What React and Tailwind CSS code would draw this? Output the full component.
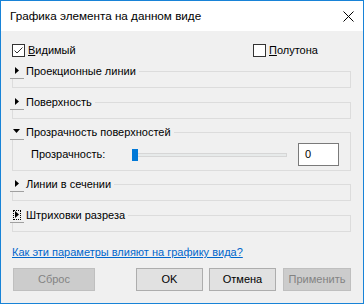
import React from "react";

function Checkbox({ checked }) {
  return (
    <div className="w-[13px] h-[13px] border border-[#333333] bg-white flex items-center justify-center shrink-0">
      {checked && (
        <svg width="11" height="11" viewBox="0 0 11 11">
          <path d="M1.5 5.5 L4 8 L9.5 2.5" fill="none" stroke="#333333" strokeWidth="1" />
        </svg>
      )}
    </div>
  );
}

function Expander({ open, focus }) {
  return (
    <div className={"w-[14px] h-[16px] bg-[#f0f0f0] border-b border-[#a0a0a0] flex items-center justify-center shrink-0 " + (focus ? "outline outline-1 outline-dotted outline-black -outline-offset-[4px]" : "")}>
      {open ? (
        <svg width="8" height="5" viewBox="0 0 8 5"><path d="M0 0 H7 L3.5 4 Z" fill="#000" /></svg>
      ) : (
        <svg width="5" height="8" viewBox="0 0 5 8"><path d="M0 0 V7 L4 3.5 Z" fill="#000" /></svg>
      )}
    </div>
  );
}

function Group({ title, open, focus, className, children }) {
  return (
    <div className={"w-[339px] border border-[#dcdcdc] flex flex-col " + className}>
      <div className="-mt-[9px] -ml-[3px] h-[16px] flex items-center w-fit bg-[#f0f0f0] pr-[3px]">
        <Expander open={open} focus={focus} />
        <span className="ml-[2px] leading-[16px]">{title}</span>
      </div>
      {children}
    </div>
  );
}

export default function App() {
  return (
    <div
      className="w-[364px] h-[304px] border border-[#1883d7] bg-[#f0f0f0] flex flex-col text-[11px] text-black"
      style={{ fontFamily: '"Liberation Sans", Arial, sans-serif' }}
    >
      <div className="h-[30px] bg-white flex items-center pl-[9px] pr-[9px] shrink-0">
        <span className="text-[11.7px]">Графика элемента на данном виде</span>
        <svg className="ml-auto" width="11" height="11" viewBox="0 0 11 11">
          <path d="M0.5 0.5 L10.5 10.5 M10.5 0.5 L0.5 10.5" stroke="#000" strokeWidth="1" />
        </svg>
      </div>
      <div className="flex flex-col pl-[11px]">
        <div className="mt-[13px] h-[13px] flex items-center">
          <div className="w-[241px] flex items-center">
            <Checkbox checked />
            <span className="ml-[3px] leading-[13px]"><span className="underline">В</span>идимый</span>
          </div>
          <div className="flex items-center">
            <Checkbox />
            <span className="ml-[3px] leading-[13px]"><span className="underline">П</span>олутона</span>
          </div>
        </div>
        <Group title="Проекционные линии" className="mt-[14px] h-[17px]" />
        <Group title="Поверхность" className="mt-[14px] h-[17px]" />
        <Group title="Прозрачность поверхностей" open className="mt-[13px] h-[39px]">
          <div className="flex items-center h-[23px] mt-[3px]">
            <span className="ml-[18px] w-[101px]">Прозрачность:</span>
            <div className="relative w-[156px] h-[12px] flex items-center">
              <div className="ml-[4px] w-[151px] h-[4px] bg-[#e7eaea] border border-[#d6d6d6]" />
              <div className="absolute left-0 top-0 w-[6px] h-[12px] bg-[#0078d7]" />
            </div>
            <div className="ml-[10px] w-[41px] h-[23px] border border-[#7a7a7a] bg-white flex items-center pl-[6px]">0</div>
          </div>
        </Group>
        <Group title="Линии в сечении" className="mt-[13px] h-[17px]" />
        <Group title="Штриховки разреза" focus className="mt-[14px] h-[17px]" />
        <div className="mt-[13px] h-[14px] flex items-center">
          <span className="text-[#0066cc] underline leading-[14px]">Как эти параметры влияют на графику вида?</span>
        </div>
        <div className="mt-[9px] flex h-[23px]">
          <div className="ml-[1px] w-[82px] h-[23px] bg-[#cccccc] border border-[#bfbfbf] text-[#838383] flex items-center justify-center">Сброс</div>
          <div className="ml-[41px] w-[67px] h-[23px] bg-[#e1e1e1] border border-[#adadad] flex items-center justify-center">OK</div>
          <div className="ml-[6px] w-[67px] h-[23px] bg-[#e1e1e1] border border-[#adadad] flex items-center justify-center">Отмена</div>
          <div className="ml-[7px] w-[68px] h-[23px] bg-[#cccccc] border border-[#bfbfbf] text-[#838383] flex items-center justify-center">Применить</div>
        </div>
      </div>
    </div>
  );
}
